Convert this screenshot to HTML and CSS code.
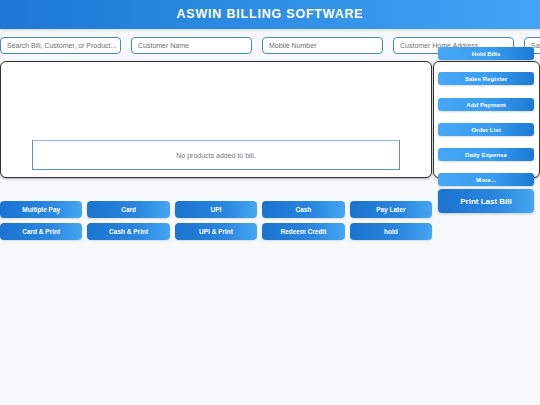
FILE: index.html
```html
<!DOCTYPE html>
<html>
<head>
<meta charset="utf-8">
<link rel="stylesheet" href="styles.css">
</head>
<body>
<header class="header">ASWIN BILLING SOFTWARE</header>
<div class="inputs">
  <input class="field" placeholder="Search Bill, Customer, or Product...">
  <input class="field" placeholder="Customer Name">
  <input class="field" placeholder="Mobile Number">
  <input class="field" placeholder="Customer Home Address">
  <input class="field" placeholder="Salesman">
</div>
<div class="main">
  <div class="left">
    <div class="bill-panel">
      <div class="empty">No products added to bill.</div>
    </div>
    <div class="pay-grid">
      <button class="pay">Multiple Pay</button>
      <button class="pay">Card</button>
      <button class="pay">UPI</button>
      <button class="pay">Cash</button>
      <button class="pay">Pay Later</button>
      <button class="pay">Card &amp; Print</button>
      <button class="pay">Cash &amp; Print</button>
      <button class="pay">UPI &amp; Print</button>
      <button class="pay">Redeem Credit</button>
      <button class="pay">hold</button>
    </div>
  </div>
  <div class="right">
    <div class="side-panel">
      <button class="side first">Hold Bills</button>
      <button class="side">Sales Register</button>
      <button class="side">Add Payment</button>
      <button class="side">Order List</button>
      <button class="side">Daily Expense</button>
      <button class="side">More...</button>
    </div>
    <button class="print">Print Last Bill</button>
  </div>
</div>
</body>
</html>
```
FILE: styles.css
```css
* { box-sizing: border-box; }
html, body { margin: 0; padding: 0; }
body {
  width: 540px;
  height: 405px;
  overflow: hidden;
  background: #f7f8fa;
  font-family: "Liberation Sans", Arial, sans-serif;
}
.header {
  height: 29px;
  line-height: 29px;
  text-align: center;
  color: #fff;
  font-weight: bold;
  font-size: 12.5px;
  letter-spacing: 0.8px;
  background: linear-gradient(90deg, #1c78d4 0%, #2f8ee3 50%, #42a5f5 100%);
  box-shadow: 0 1px 3px rgba(0,0,0,0.15);
}
.inputs {
  display: flex;
  gap: 10px;
  padding-top: 8px;
  width: 540px;
  overflow: hidden;
}
.field {
  flex: 0 0 121px;
  width: 121px;
  height: 17px;
  border: 1px solid #4a86c5;
  border-radius: 4px;
  background: #fff;
  padding: 0 0 0 6px;
  font-family: "Liberation Sans", Arial, sans-serif;
  font-size: 7px;
  outline: none;
}
.field::placeholder { color: #707070; }
.main {
  display: flex;
  margin-top: 7px;
  align-items: flex-start;
}
.left {
  width: 433px;
  flex: 0 0 433px;
}
.bill-panel {
  height: 117px;
  width: 432px;
  background: #fff;
  border: 1px solid #333;
  border-radius: 6px;
  display: flex;
  flex-direction: column;
  justify-content: flex-end;
  padding: 0 31px 7px 31px;
  box-shadow: 0 1px 2px rgba(0,0,0,0.3);
}
.empty {
  height: 30px;
  border: 1px solid #5b93cb;
  border-top-color: #8cb8e2;
  color: #777;
  font-size: 7px;
  display: flex;
  align-items: center;
  justify-content: center;
}
.pay-grid {
  display: grid;
  grid-template-columns: repeat(5, 1fr);
  column-gap: 5px;
  row-gap: 5px;
  margin-top: 23px;
  width: 432px;
}
.pay, .side, .print {
  border: none;
  color: #fff;
  font-family: "Liberation Sans", Arial, sans-serif;
  font-weight: bold;
  padding: 0;
  cursor: pointer;
}
.pay {
  height: 17px;
  font-size: 6.5px;
  border-radius: 4px;
  background: linear-gradient(90deg, #1b74d0 0%, #2a86de 60%, #45a6f3 100%);
  box-shadow: 0 1px 2px rgba(0,0,0,0.12);
}
.right {
  width: 107px;
  flex: 0 0 107px;
  display: flex;
  flex-direction: column;
  align-items: flex-start;
}
.side-panel {
  width: 107px;
  height: 117px;
  border: 1px solid #333;
  border-radius: 6px;
  background: #fff;
  display: flex;
  flex-direction: column;
  gap: 12.3px;
  padding: 0 5px 0 4px;
  box-shadow: 0 1px 2px rgba(0,0,0,0.3);
}
.side {
  height: 13px;
  flex: 0 0 13px;
  font-size: 6.2px;
  border-radius: 3px;
  background: linear-gradient(90deg, #45a7f4 0%, #3a9cef 55%, #1c7ad4 100%);
  box-shadow: 0 1px 2px rgba(0,0,0,0.15);
}
.side.first { margin-top: -15px; }
.print {
  width: 96px;
  height: 24px;
  margin-top: 11px;
  margin-left: 5px;
  font-size: 8px;
  border-radius: 4px;
  background: linear-gradient(90deg, #1b74d0 0%, #2a86de 60%, #45a6f3 100%);
  box-shadow: 0 1px 3px rgba(0,0,0,0.2);
}
```
